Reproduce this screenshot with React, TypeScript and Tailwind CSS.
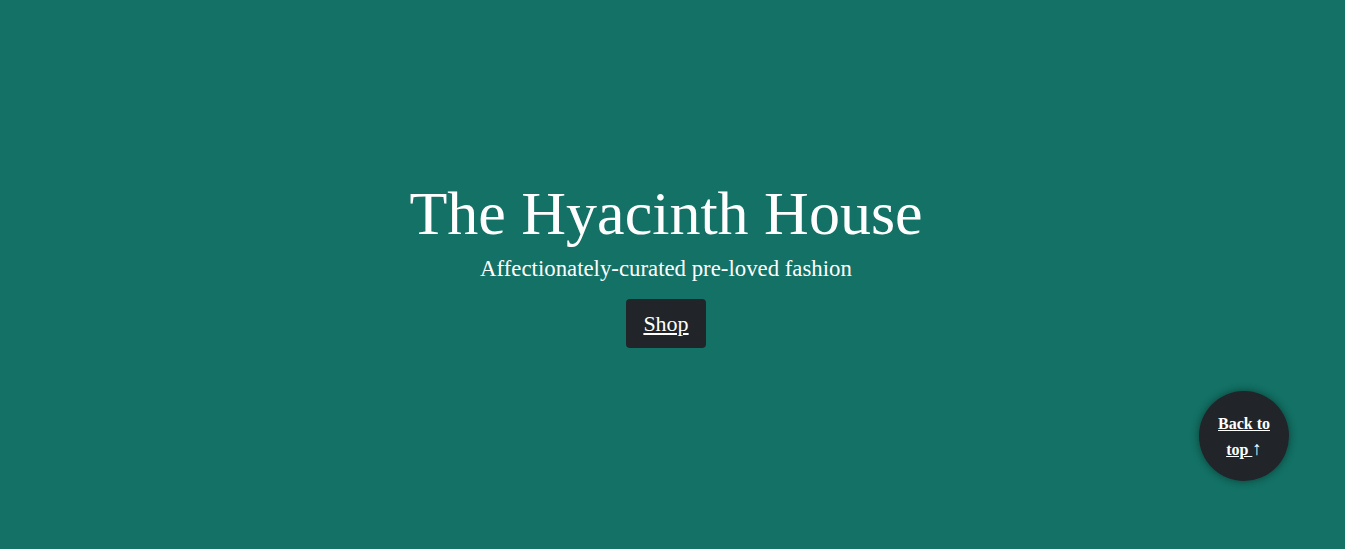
import React from "react";

export default function App() {
  return (
    <div
      className="relative h-[549px] w-full overflow-hidden bg-[#137165] text-white"
      style={{ fontFamily: '"Liberation Serif", "DejaVu Serif", serif' }}
    >
      <div className="flex h-full flex-col items-center justify-center pr-[13px] pb-[25px]">
        <h1 className="text-[62px] leading-[1.2] font-normal">The Hyacinth House</h1>
        <p className="mt-[1px] text-[22.8px] leading-[1.5] font-medium">Affectionately-curated pre-loved fashion</p>
        <a
          href="#"
          className="mt-[13px] rounded-[4px] bg-[#212529] px-[17px] py-[8px] text-[22px] leading-[1.5] underline"
        >
          Shop
        </a>
      </div>
      <a
        href="#"
        className="absolute right-[56px] bottom-[68px] flex h-[90px] w-[90px] flex-col items-center justify-center rounded-full bg-[#212529] text-center text-[16px] leading-[25px] font-bold shadow-[0_0_8px_rgba(0,0,0,0.45)]"
      >
        <span className="underline">Back to</span>
        <span>
          <span className="underline">top </span>
          <span className="text-[19px] font-normal">↑</span>
        </span>
      </a>
    </div>
  );
}
